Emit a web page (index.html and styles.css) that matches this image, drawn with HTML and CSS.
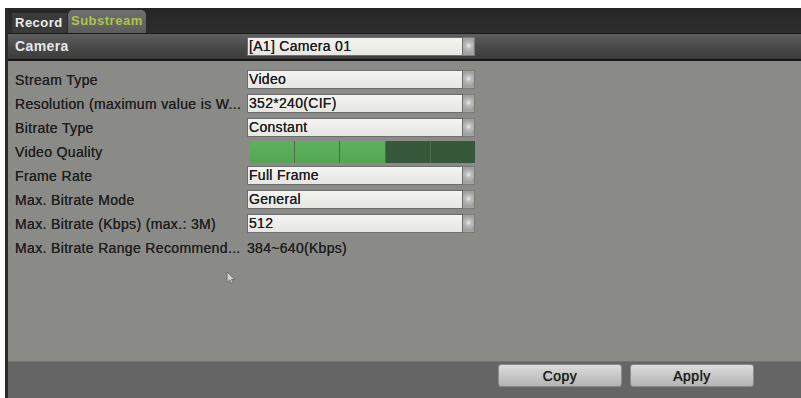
FILE: index.html
```html
<!DOCTYPE html>
<html>
<head>
<meta charset="utf-8">
<link rel="stylesheet" href="styles.css">
</head>
<body>
<div class="window">
  <div class="tabbar">
    <div class="tab tab-record">Record</div>
    <div class="tab tab-sub">Substream</div>
  </div>
  <div class="camrow">
    <div class="label cam-label">Camera</div>
    <div class="select"><div class="sel-box">[A1] Camera 01</div><div class="sel-arrow"></div></div>
  </div>
  <div class="panel">
    <div class="row"><div class="label">Stream Type</div><div class="select"><div class="sel-box">Video</div><div class="sel-arrow"></div></div></div>
    <div class="row"><div class="label">Resolution (maximum value is W...</div><div class="select"><div class="sel-box">352*240(CIF)</div><div class="sel-arrow"></div></div></div>
    <div class="row"><div class="label">Bitrate Type</div><div class="select"><div class="sel-box">Constant</div><div class="sel-arrow"></div></div></div>
    <div class="row"><div class="label">Video Quality</div>
      <div class="quality">
        <div class="seg on"></div><div class="seg on"></div><div class="seg on"></div><div class="seg off"></div><div class="seg off"></div>
      </div>
    </div>
    <div class="row"><div class="label">Frame Rate</div><div class="select"><div class="sel-box">Full Frame</div><div class="sel-arrow"></div></div></div>
    <div class="row"><div class="label">Max. Bitrate Mode</div><div class="select"><div class="sel-box">General</div><div class="sel-arrow"></div></div></div>
    <div class="row"><div class="label">Max. Bitrate (Kbps) (max.: 3M)</div><div class="select"><div class="sel-box">512</div><div class="sel-arrow"></div></div></div>
    <div class="row"><div class="label">Max. Bitrate Range Recommend...</div><div class="value">384~640(Kbps)</div></div>
    <div class="cursor-area">
      <svg class="cursor" width="10" height="14" viewBox="0 0 10 14"><path d="M1 1 L1 11.5 L3.8 9 L5.8 13 L7.4 12.2 L5.5 8.4 L9 8.4 Z" fill="#d2d2d2" stroke="#6a6a6a" stroke-width="0.9"/></svg>
    </div>
  </div>
  <div class="bottombar">
    <div class="btn">Copy</div>
    <div class="btn">Apply</div>
  </div>
</div>
</body>
</html>
```
FILE: styles.css
```css
html, body {
  margin: 0;
  padding: 0;
  background: #ffffff;
  width: 801px;
  height: 398px;
  overflow: hidden;
  font-family: "Liberation Sans", Arial, sans-serif;
}
.window {
  margin: 8px 0 0 5px;
  border-left: 3px solid #2c2c2c;
  height: 390px;
  display: flex;
  flex-direction: column;
}
.tabbar {
  height: 25px;
  background: linear-gradient(#262626, #2e2e2e);
  display: flex;
  align-items: flex-end;
  padding-left: 4px;
  gap: 1px;
  border-bottom: 1px solid #1a1a1a;
}
.tab {
  height: 20px;
  line-height: 20px;
  font-size: 13px;
  font-weight: bold;
  padding: 0 3px;
  box-sizing: border-box;
  letter-spacing: 0.5px;
}
.tab-record {
  width: 55px;
  background: #3a3a3a;
  color: #ececec;
}
.tab-sub {
  width: 78px;
  height: 23px;
  line-height: 22px;
  background: linear-gradient(#707070, #5c5c5c);
  color: #aec44c;
  border-radius: 5px 5px 0 0;
  padding-left: 3px;
  letter-spacing: 0.5px;
}
.camrow {
  height: 25px;
  background: linear-gradient(#5e5e5e, #4a4a4a 50%, #3c3c3c);
  border-bottom: 2px solid #161616;
  display: flex;
  align-items: center;
  padding-left: 7px;
}
.label.cam-label {
  color: #e8e8e8;
  font-weight: bold;
  text-shadow: none;
  letter-spacing: 0.4px;
  width: 232px;
}
.panel {
  height: 301px;
  background: #8a8a86;
  padding: 7px 0 0 7px;
  box-sizing: border-box;
  display: flex;
  flex-direction: column;
}
.row {
  height: 24px;
  display: flex;
  align-items: center;
}
.label {
  width: 232px;
  flex: none;
  font-size: 14px;
  letter-spacing: 0.35px;
  color: #202020;
  text-shadow: 0 0 0.6px #202020;
  white-space: nowrap;
}
.select {
  display: flex;
  height: 19px;
  width: 228px;
}
.sel-box {
  flex: 1;
  background: linear-gradient(#f4f4f2, #e6e6e2);
  border: 1px solid #6e6e6e;
  font-size: 14px;
  letter-spacing: 0.3px;
  line-height: 17px;
  color: #1c1c1c;
  text-shadow: 0 0 0.5px #1c1c1c;
  padding-left: 1px;
  box-sizing: border-box;
  white-space: nowrap;
  overflow: hidden;
}
.sel-arrow {
  width: 12px;
  background: radial-gradient(circle at 50% 45%, #e8e8e8 0, #bdbdbd 3px, #a2a2a2 7px);
  border: 1px solid #7a7a7a;
  border-left: none;
  box-sizing: border-box;
}
.quality {
  display: flex;
  width: 225px;
  height: 22px;
  margin-left: 3px;
  gap: 1px;
  background: #4f6a50;
}
.seg {
  flex: 1;
}
.seg.on {
  background: linear-gradient(#5cb15a, #56a654);
}
.seg.off {
  background: #38583c;
}
.value {
  font-size: 14px;
  letter-spacing: 0.3px;
  color: #202020;
  text-shadow: 0 0 0.6px #202020;
}
.cursor-area {
  height: 40px;
  padding: 11px 0 0 211px;
  box-sizing: border-box;
}
.cursor {
  display: block;
}
.bottombar {
  height: 37px;
  background: #656565;
  border-top: 1px solid #777;
  display: flex;
  justify-content: flex-end;
  align-items: flex-start;
  padding-top: 2px;
  gap: 8px;
  padding-right: 47px;
  box-sizing: border-box;
}
.btn {
  width: 124px;
  height: 23px;
  line-height: 22px;
  text-align: center;
  font-size: 14px;
  letter-spacing: 0.5px;
  color: #202020;
  text-shadow: 0 0 0.7px #202020;
  background: linear-gradient(#dcdcdc, #c8c8c8 50%, #b4b4b4);
  border-radius: 3px;
  border: 1px solid #8a8a8a;
  box-sizing: border-box;
}
```
